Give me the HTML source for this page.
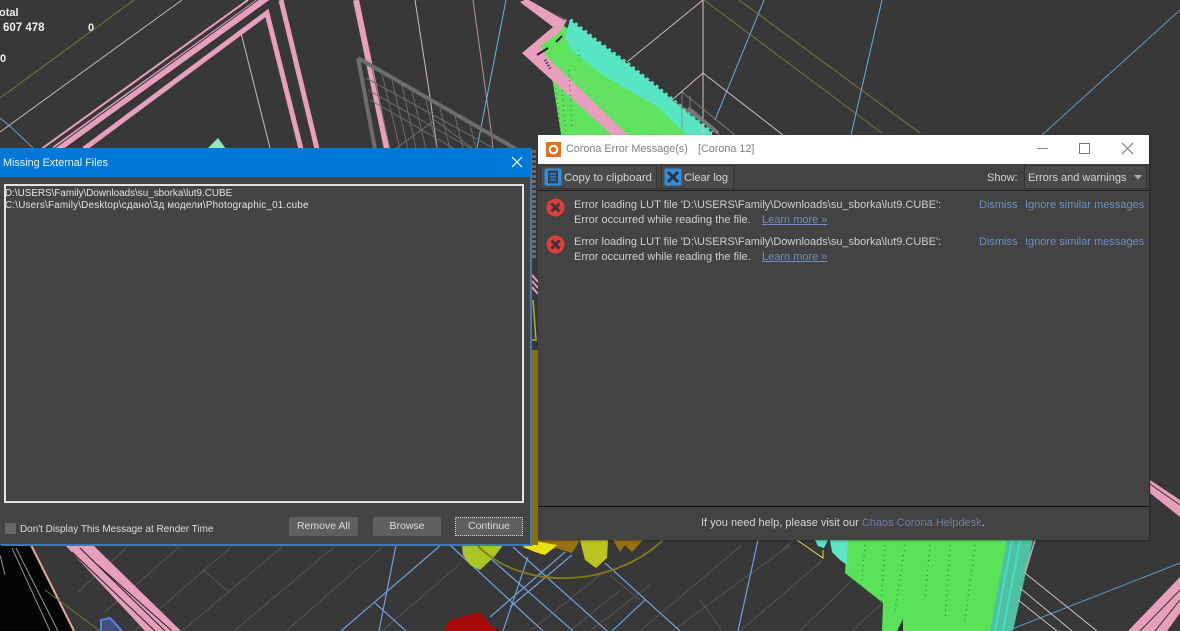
<!DOCTYPE html>
<html><head><meta charset="utf-8">
<style>
html,body{margin:0;padding:0;width:1180px;height:631px;overflow:hidden;background:#383838;font-family:"Liberation Sans","DejaVu Sans",sans-serif}
#bg{position:absolute;left:0;top:0}
.a{position:absolute;white-space:nowrap}
.t{font-size:11px;color:#cfcfcf;line-height:14px}
.l{color:#6f8fc4}
.btn{position:absolute;top:517px;height:19px;background:#5f5f5f;border-radius:2px;color:#dcdcdc;font-size:10.5px;line-height:19px;text-align:center}
</style></head><body>
<svg id="bg" width="1180" height="631" viewBox="0 0 1180 631" fill="none">
<rect width="1180" height="631" fill="#383838"/>
<!-- faint grid bottom -->
<g stroke="#555" stroke-width="1">
<path d="M127 547L77 593M179 547L105 612M231 547L134 631M282 547L182 631M334 547L234 631M382 547L286 631M203 570L229 592M461 563L382 631"/>
<path d="M640 631L742 545M672 631L790 545M590 631L650 585M700 600L722 631M570 631L620 590M610 575L640 600M530 631L600 575"/>
<path d="M852 580L800 631M882 603L852 631M793 540L780 552M823 560L740 631"/>
</g>
<!-- thin lines top-left -->
<path d="M0 98L134 0" stroke="#77763a"/>
<path d="M0 132L182 0" stroke="#b9b9b9"/>
<path d="M0 118L12 128L33 148" stroke="#6a9cc4"/>
<path d="M241 33L270 148" stroke="#c8bcbc"/>
<path d="M415 0L430 97L437 148" stroke="#d0b8c0"/>
<path d="M473 0L491 130L493 148" stroke="#b48ea4"/>
<path d="M506 0L477 148" stroke="#6fb4dc"/>
<!-- pink bands top-left -->
<g stroke="#e79fbd" fill="none">
<path d="M40 150L248 0" stroke-width="2"/>
<path d="M55 150L268 -4" stroke-width="8"/>
<path d="M84 149L267 13L301 149" stroke-width="5"/>
<path d="M281 0L317 149" stroke-width="5"/>
<path d="M356 0L387 149" stroke-width="6"/>
</g>
<path d="M52 150L258 0M64 150L268 2" stroke="#333" stroke-width="1"/>
<!-- grey mesh -->
<path d="M358 58L516 149" stroke="#6d6d6d" stroke-width="4"/>
<path d="M358 58L375 149" stroke="#6d6d6d" stroke-width="4"/>
<g stroke="#6b6b6b" stroke-width="1">
<path d="M372 68L390 149M382 74L400 149M392 80L408 149M402 85L416 149M412 91L426 149M426 100L437 149M440 108L450 149M455 116L463 149M470 125L476 149"/>
<path d="M366 78L495 149M368 90L472 149M370 100L455 149M395 149L435 120L472 148"/>
</g>
<!-- green leaf -->
<path d="M207 149L218 138L226 149Z" fill="#8fe6c0"/>
<!-- top-right green + cyan + pink -->
<path d="M540 46L563 25L712 135H561L553 83Z" fill="#5fe35f"/>
<path d="M570 20L598 42L625 62L658 88L688 113L712 133V135H686L658 107L628 90L598 72L572 50L565 37Z" fill="#58e5c4"/>
<path d="M570 20L598 42L625 62L658 88L688 113L712 133" stroke="#58e5c4" stroke-width="4" stroke-dasharray="3 3"/>
<path d="M520 2L527 -1L567 20L560 32L540 46L548 58L628 135H612L555 83L522 53L553 27Z" fill="#e79fbd"/>
<path d="M530 0L565 20" stroke="#333" stroke-width="1"/>
<path d="M556 42L562 36M537 55L548 48" stroke="#222" stroke-width="2"/>
<path d="M545 60L551 70" stroke="#222" stroke-width="3" stroke-dasharray="1 2"/>
<g stroke="#2f7a2f" stroke-dasharray="1 4"><path d="M556 88L561 135M562 90L566 135M569 70L572 130M578 50L580 60"/></g>
<path d="M560 60L620 120M570 60L640 125M590 75L660 133" stroke="#8fd08a" stroke-width="1" opacity=".6"/>
<!-- thin lines top-right -->
<path d="M703 0V135" stroke="#d9bcc4"/>
<path d="M627 62L703 0" stroke="#d3b8c0"/>
<path d="M704 0L882 133" stroke="#77743a"/>
<path d="M739 0L920 133" stroke="#77743a"/>
<path d="M764 0L715 120" stroke="#62b0e0"/>
<path d="M882 0L851 135" stroke="#62b0e0"/>
<path d="M1180 10L1042 135" stroke="#5c9cc0"/>
<path d="M672 100L703 73L783 135" stroke="#d3c0c8"/>
<path d="M682 92V130M690 96V115M682 92L735 135M672 100L720 135" stroke="#8a8a8a" stroke-width=".8"/>
<path d="M688 108L718 133" stroke="#777" stroke-width="4"/>
<!-- pink right -->
<path d="M1150 480L1180 500V517L1150 493Z" fill="#e79fbd"/>
<path d="M1150 484L1180 505" stroke="#333"/>
<path d="M1180 577L1128 631H1167L1180 613Z" fill="#e79fbd"/>
<path d="M1180 590L1140 631M1180 600L1155 631" stroke="#333"/>
<!-- green bottom -->
<path d="M847 540L845 573L883 603L882 631H993L1020 540Z" fill="#58e358"/>
<path d="M815 540H828L824 548L818 546ZM830 540H848L847 565L840 560L832 552Z" fill="#5ce5c6"/>
<path d="M1007 540H1033L1013 631H990Z" fill="#4fc0a0"/>
<path d="M1012 540L995 631M1020 540L1003 631" stroke="#45dcc8" stroke-width="2"/>
<path d="M1035 540L1025 573" stroke="#c6a8b8" stroke-width="1.5"/>
<path d="M797 540L823 558V550" stroke="#e0e040"/>
<path d="M903 619L897 631H903Z" fill="#333"/>
<g stroke="#256d25" stroke-dasharray="1 4"><path d="M865 545L860 600M885 545L880 620M905 545L895 610M930 545L925 600M950 545L945 620M975 545L965 620"/></g>
<path d="M1012 629L1180 563" stroke="#5c9cc0"/>
<path d="M1025 573L1097 631M1020 588L1072 631M1018 600L1057 631" stroke="#d3c0c8"/>
<!-- bottom-left black -->
<path d="M0 545H31L74 631H0Z" fill="#050505"/>
<g stroke="#cfcfcf" stroke-width="1" opacity=".7"><path d="M12 548L50 631M16 548L58 631M0 555L5 575"/></g>
<path d="M31 545L74 631" stroke="#e0a99a" stroke-width="2"/>
<path d="M45 590L100 631" stroke="#77743a"/>
<path d="M65 545H93L181 631H145Z" fill="#e79fbd"/>
<path d="M80 548L165 631M92 560L172 631M72 552L155 631" stroke="#222" stroke-width="1"/>
<path d="M101 631V620L110 618L122 631" stroke="#5f82e0" stroke-width="2" fill="#3f4f80"/>
<!-- red blob -->
<path d="M443 631L450 620L480 612L490 625L500 631Z" fill="#a80a0a"/>
<!-- blue lines bottom -->
<g stroke="#6e9fe0" stroke-width="1.2">
<path d="M396 545L379 631"/>
<path d="M441 545L341 631"/>
<path d="M375 603L406 631"/>
<path d="M450 545L543 631M490 558L573 631M513 547L607 631"/>
<path d="M565 552L490 617M572 555L510 607M528 557L503 631"/>
<path d="M605 563L680 631M645 600L612 631"/>
<path d="M758 540L738 631"/>
</g>
<!-- plants -->
<path d="M462 545H503L495 556L480 570L470 565L463 555Z" fill="#a9c526"/>
<path d="M580 540H608L607 558L596 568L585 560Z" fill="#bcc41f"/>
<path d="M538 540H580L572 553L556 548L540 555Z" fill="#97700f"/>
<path d="M523 547L530 540L557 545L545 555L535 552Z" fill="#e8e010"/>
<path d="M613 540H643L632 552L625 545L620 552Z" fill="#97700f"/>
<path d="M477 545C520 590 610 590 663 540" stroke="#877a1a" stroke-width="1.8"/>
<!-- olive column between dialogs -->
<rect x="532" y="350" width="6" height="195" fill="#857112"/>
<path d="M534 150V260" stroke="#6b6b6b" stroke-width="4" stroke-dasharray="3 2"/>
<path d="M532 275L538 282M532 281L538 288M532 287L538 294" stroke="#e79fbd" stroke-width="2"/>
<path d="M533 300L536 340H532" stroke="#a8b030" stroke-width="1.5"/>
</svg>

<!-- top-left stats -->
<div class="a" style="left:-1px;top:6px;color:#eee;font-weight:bold;font-size:11px;line-height:14px">otal</div>
<div class="a" style="left:3px;top:21px;color:#eee;font-weight:bold;font-size:11.5px;line-height:14px">607 478</div>
<div class="a" style="left:88px;top:21px;color:#eee;font-weight:bold;font-size:11px;line-height:14px">0</div>
<div class="a" style="left:0;top:52px;color:#eee;font-weight:bold;font-size:11px;line-height:14px">0</div>

<!-- left dialog -->
<div class="a" style="left:0;top:148px;width:531px;height:397px;background:#444;box-shadow:inset -1px -1px 0 #3f79b4,1px 1px 0 #3f79b4">
  <div class="a" style="left:0;top:0;width:531px;height:29px;background:#0078d7"></div>
  <div class="a" style="left:3px;top:7px;color:#e8f2fb;font-size:10.8px;line-height:16px">Missing External Files</div>
  <svg class="a" style="left:511px;top:8px" width="12" height="12"><path d="M1 1L11 11M11 1L1 11" stroke="#fff" stroke-width="1.2"/></svg>
  <div class="a" style="left:4px;top:36px;width:516px;height:315px;border:2px solid #e2e2e2;background:#444"></div>
  <div class="a" style="left:5px;top:40px;color:#e4e4e4;font-size:9.9px;line-height:12.4px">D:\USERS\Family\Downloads\su_sborka\lut9.CUBE<br><span style="letter-spacing:.2px">C:\Users\Family\Desktop\сдано\3д модели\Photographic_01.cube</span></div>
  <div class="a" style="left:5px;top:375px;width:11px;height:11px;background:#666"></div>
  <div class="a" style="left:20px;top:375px;color:#dedede;font-size:9.95px;line-height:14px">Don't Display This Message at Render Time</div>
</div>
<div class="btn" style="left:289px;width:69px">Remove All</div>
<div class="btn" style="left:373px;width:68px">Browse</div>
<div class="btn" style="left:455px;width:66px;height:17px;line-height:17px;border:1px dotted #cfcfcf;border-radius:0">Continue</div>

<!-- right dialog -->
<div class="a" style="left:538px;top:135px;width:611px;height:405px;background:#434343;box-shadow:1px 1px 2px rgba(0,0,0,.35)">
  <div class="a" style="left:0;top:0;width:611px;height:29px;background:#fff"></div>
  <svg class="a" style="left:8px;top:7px" width="15" height="15"><rect width="15" height="15" fill="#e2701f"/><circle cx="7.5" cy="7.5" r="3.8" fill="none" stroke="#fff" stroke-width="2"/></svg>
  <div class="a" style="left:28px;top:7px;color:#808080;font-size:10.8px;line-height:15px">Corona Error Message(s)</div>
  <div class="a" style="left:160px;top:7px;color:#808080;font-size:10.8px;line-height:15px">[Corona 12]</div>
  <svg class="a" style="left:499px;top:7px" width="100" height="13" fill="none"><path d="M0 6.5H11" stroke="#888"/><rect x="42.5" y="1.5" width="10" height="10" stroke="#777"/><path d="M85 1L96 12M96 1L85 12" stroke="#777"/></svg>
  <div class="a" style="left:0;top:29px;width:611px;height:27px;background:#434343;border-bottom:1px solid #222;box-sizing:border-box"></div>
  <div class="a" style="left:2px;top:30px;width:117px;height:24px;background:#4a4a4a;border:1px solid #353535;box-sizing:border-box"></div>
  <div class="a" style="left:123px;top:30px;width:73px;height:24px;background:#4a4a4a;border:1px solid #353535;box-sizing:border-box"></div>
  <svg class="a" style="left:6px;top:33px" width="18" height="18" fill="none"><rect x=".5" y=".5" width="17" height="17" rx="2" fill="#2f8fdc"/><rect x="4" y="2.5" width="10" height="13" fill="#3a4048"/><path d="M6 6H12M6 9H12M6 12H12" stroke="#2f8fdc" stroke-width="1.2"/></svg>
  <div class="a t" style="left:26px;top:36px;color:#d4d4d4;font-size:11.3px">Copy to clipboard</div>
  <svg class="a" style="left:126px;top:33px" width="18" height="18" fill="none"><rect x=".5" y=".5" width="17" height="17" rx="2" fill="#2f8fdc"/><path d="M4 4L14 14M14 4L4 14" stroke="#283340" stroke-width="3"/></svg>
  <div class="a t" style="left:146px;top:36px;color:#d4d4d4">Clear log</div>
  <div class="a t" style="left:449px;top:36px;color:#d4d4d4">Show:</div>
  <div class="a" style="left:486px;top:30px;width:123px;height:24px;background:#4a4a4a;border:1px solid #333;box-sizing:border-box"></div>
  <div class="a t" style="left:490px;top:36px;color:#d4d4d4">Errors and warnings</div>
  <svg class="a" style="left:596px;top:40px" width="8" height="5"><path d="M0 0H8L4 4.5Z" fill="#aaa"/></svg>

  <svg class="a" style="left:8px;top:63px" width="19" height="19"><circle cx="9.5" cy="9.5" r="9" fill="#e23b3b"/><path d="M5.5 5.5L13.5 13.5M13.5 5.5L5.5 13.5" stroke="#38383c" stroke-width="3"/></svg>
  <div class="a t" style="left:36px;top:63px;line-height:15px">Error loading LUT file 'D:\USERS\Family\Downloads\su_sborka\lut9.CUBE':<br>Error occurred while reading the file.</div>
  <div class="a t l" style="left:224px;top:78px;line-height:15px;text-decoration:underline">Learn more »</div>
  <div class="a t l" style="left:441px;top:63px;line-height:15px">Dismiss</div>
  <div class="a t l" style="left:487px;top:63px;line-height:15px">Ignore similar messages</div>

  <svg class="a" style="left:8px;top:100px" width="19" height="19"><circle cx="9.5" cy="9.5" r="9" fill="#e23b3b"/><path d="M5.5 5.5L13.5 13.5M13.5 5.5L5.5 13.5" stroke="#38383c" stroke-width="3"/></svg>
  <div class="a t" style="left:36px;top:100px;line-height:15px">Error loading LUT file 'D:\USERS\Family\Downloads\su_sborka\lut9.CUBE':<br>Error occurred while reading the file.</div>
  <div class="a t l" style="left:224px;top:115px;line-height:15px;text-decoration:underline">Learn more »</div>
  <div class="a t l" style="left:441px;top:100px;line-height:15px">Dismiss</div>
  <div class="a t l" style="left:487px;top:100px;line-height:15px">Ignore similar messages</div>

  <div class="a" style="left:0;top:371px;width:610px;height:1px;background:#111"></div>
  <div class="a t" style="left:163px;top:381px;line-height:15px;color:#d6d6d6">If you need help, please visit our <span style="color:#6d7ea6">Chaos Corona Helpdesk</span>.</div>
</div>
</body></html>
